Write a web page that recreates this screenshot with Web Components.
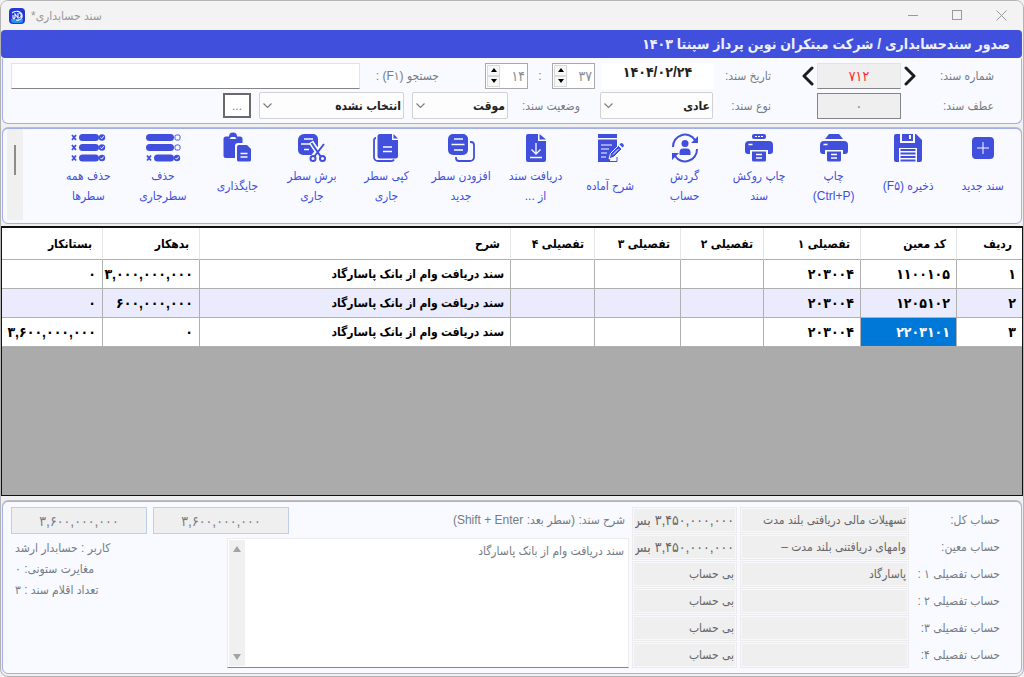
<!DOCTYPE html>
<html lang="fa" dir="rtl">
<head>
<meta charset="utf-8">
<title>سند حسابداری</title>
<style>
  :root {
    --accent: #4150dc;
    --panel: #f9faff;
    --line: #a3aeea;
    --muted: #747c86;
    --field: #efefef;
  }
  body {
    margin: 0;
    background: #f0f0f0;
    font: 12px/20px "Liberation Sans", "DejaVu Sans Condensed", "DejaVu Sans", sans-serif;
    color: var(--muted);
  }
  .form-row { display: flex; align-items: center; min-height: 27px; }
  .form-row + .form-row { margin-top: 3px; }
  .gap-s { margin-inline-start: 8px; }
  .gap-m { margin-inline-start: 20px; }
  .gap-l { margin-inline-start: 46px; }
  .gap-nav { margin-inline-start: 28px; }
  .grow { flex: 1; }
  .tools { display: flex; }
  .tools tool-button { flex: 1; }
  .summary { display: flex; gap: 3px; }
  .accounts { display: grid; gap: 1px; }
</style>
</head>
<body>
<app-window>
  <title-bar slot="title" text="سند حسابداری*"></title-bar>
  <page-banner slot="banner">صدور سندحسابداری / شرکت مبتکران نوین پرداز سپنتا ۱۴۰۳</page-banner>

  <group-panel slot="form" class="form" joined>
    <div class="form-row">
      <number-nav label="شماره سند:" value="۷۱۲"></number-nav>
      <form-field class="gap-nav" label="تاریخ سند:" value="۱۴۰۴/۰۲/۲۴" kind="date" style="--label: 57px; --control: 113px"></form-field>
      <time-spinner minute="۳۷" hour="۱۴"></time-spinner>
      <form-field class="gap-l grow" label="جستجو (F۱) :" kind="search" style="--label: 79px"></form-field>
    </div>
    <div class="form-row">
      <form-field label="عطف سند:" value="۰" kind="locked" style="--label: 93px; --control: 84px"></form-field>
      <combo-box class="gap-l" label="نوع سند:" value="عادی" style="--label: 58px; --control: 113px"></combo-box>
      <combo-box class="gap-m" label="وضعیت سند:" value="موقت" style="--label: 72px; --control: 96px"></combo-box>
      <combo-box class="gap-s" name="دسته سند" value="انتخاب نشده" style="--control: 145px"></combo-box>
      <more-button class="gap-s"></more-button>
    </div>
  </group-panel>

  <group-panel slot="tools" class="bar" handle>
    <div class="tools">
      <tool-button icon="add">سند جدید</tool-button>
      <tool-button icon="save">ذخیره (F۵)</tool-button>
      <tool-button icon="print">چاپ<br>(Ctrl+P)</tool-button>
      <tool-button icon="cover">چاپ روکش<br>سند</tool-button>
      <tool-button icon="turnover">گردش<br>حساب</tool-button>
      <tool-button icon="note">شرح آماده</tool-button>
      <tool-button icon="receive">دریافت سند<br>از ...</tool-button>
      <tool-button icon="insert">افزودن سطر<br>جدید</tool-button>
      <tool-button icon="copy">کپی سطر<br>جاری</tool-button>
      <tool-button icon="cut">برش سطر<br>جاری</tool-button>
      <tool-button icon="paste">جایگذاری</tool-button>
      <tool-button icon="remove">حذف<br>سطرجاری</tool-button>
      <tool-button icon="clear">حذف همه<br>سطرها</tool-button>
    </div>
  </group-panel>

  <ledger-grid slot="grid"></ledger-grid>

  <group-panel slot="summary" class="foot">
    <div class="summary">
      <div class="accounts">
        <account-row label="حساب کل:" value="تسهیلات مالی دریافتی بلند مدت" balance="۳,۴۵۰,۰۰۰,۰۰۰ بس" amount></account-row>
        <account-row label="حساب معین:" value="وامهای دریافتنی بلند مدت –" balance="۳,۴۵۰,۰۰۰,۰۰۰ بس" amount></account-row>
        <account-row label="حساب تفصیلی ۱ :" value="پاسارگاد" balance="بی حساب"></account-row>
        <account-row label="حساب تفصیلی ۲ :" balance="بی حساب"></account-row>
        <account-row label="حساب تفصیلی ۳:" balance="بی حساب"></account-row>
        <account-row label="حساب تفصیلی ۴:" balance="بی حساب"></account-row>
      </div>
      <document-note class="grow" label="شرح سند: (سطر بعد: Shift + Enter)" text="سند دریافت وام از بانک پاسارگاد" debit="۳,۶۰۰,۰۰۰,۰۰۰" credit="۳,۶۰۰,۰۰۰,۰۰۰">
        <div>کاربر : حسابدار ارشد</div>
        <div>مغایرت ستونی: ۰</div>
        <div>تعداد اقلام سند : ۳</div>
      </document-note>
    </div>
  </group-panel>
</app-window>

<script>
const controlStyles = `
  * { box-sizing: border-box; }
  input, select, textarea, button { font: inherit; color: inherit; margin: 0; border-radius: 0; }
  label { white-space: nowrap; }
  svg { display: block; }
`;

class BaseElement extends HTMLElement {
  constructor() {
    super();
    this.attachShadow({ mode: "open" });
  }

  connectedCallback() {
    this.shadowRoot.innerHTML = `<style>${controlStyles}${this.styles()}</style>${this.render()}`;
  }

  attr(name) {
    return this.getAttribute(name) || "";
  }
}

class AppWindow extends BaseElement {
  styles() {
    return `
      :host {
        display: flex; flex-direction: column; min-height: 100vh; box-sizing: border-box;
        border: 1px solid #b4b4b4; border-radius: 8px; overflow: hidden; padding-bottom: 2px;
      }
      slot { display: block; }
      .tools { margin-top: 4px; }
      .grid { flex: 1; display: flex; margin: 2px 0 5px; }
    `;
  }

  render() {
    return `
      <slot name="title"></slot>
      <slot name="banner"></slot>
      <slot name="form"></slot>
      <slot name="tools" class="tools"></slot>
      <slot name="grid" class="grid"></slot>
      <slot name="summary"></slot>
    `;
  }
}
customElements.define("app-window", AppWindow);

class TitleBar extends BaseElement {
  styles() {
    return `
      :host { display: flex; direction: ltr; align-items: center; height: 29px; padding: 0 8px; background: #f3f3f3; color: #989898; }
      .name { direction: rtl; margin-left: 6px; flex: 1; text-align: left; }
      button { width: 44px; height: 28px; border: 0; background: none; padding: 0; display: grid; place-items: center; }
      button:last-child { margin-right: -8px; }
    `;
  }

  render() {
    return `
      <svg width="16" height="16" viewBox="0 0 16 16">
        <rect width="16" height="16" rx="4" fill="#2438d0"/>
        <path d="M2 11h12v1a3 3 0 0 1-3 3H5a3 3 0 0 1-3-3z" fill="#2492f0"/>
        <path d="M3 5c3-3 9-2 10 2s-3 6-6 5M4 7v3c0 1 2 1 2-1V6l3 4V5M10 5c3 0 3 4 0 5" fill="none" stroke="#dff0ff" stroke-width="1.2"/>
      </svg>
      <span class="name">${this.attr("text")}</span>
      <button aria-label="کوچک"><svg width="11" height="11"><path d="M0 5.500h10" stroke="#9a9a9a"/></svg></button>
      <button aria-label="بزرگ"><svg width="11" height="11"><rect x=".5" y=".5" width="9" height="9" fill="none" stroke="#9a9a9a"/></svg></button>
      <button aria-label="بستن"><svg width="11" height="11"><path d="M.5.5l10 10M10.500.5l-10 10" stroke="#9a9a9a"/></svg></button>
    `;
  }
}
customElements.define("title-bar", TitleBar);

class PageBanner extends BaseElement {
  styles() {
    return `
      :host {
        display: block; margin-inline-start: 1px; padding: 0 12px; border-radius: 4px; background: var(--accent);
        color: #eef0ff; font-size: 14px; font-weight: bold; line-height: 28px;
      }
    `;
  }

  render() {
    return `<slot></slot>`;
  }
}
customElements.define("page-banner", PageBanner);

class GroupPanel extends BaseElement {
  styles() {
    return `
      :host {
        display: flex; margin: 0 1px; background: var(--panel); box-sizing: border-box;
        border: 1px solid var(--line); border-radius: 6px; box-shadow: 0 -1px 0 #bdbdc4;
      }
      :host([joined]) { border-top-color: transparent; box-shadow: none; border-radius: 0 0 6px 6px; }
      :host(.form) { padding: 3px 27px 4px 8px; }
      :host(.bar) { padding: 0 1px 3px 4px; }
      :host(.foot) { padding: 5px 21px 5px 8px; }
      .body { flex: 1; min-width: 0; }
      .handle { display: none; width: 16px; background: #f0f0f0; margin-inline-start: 28px; }
      .handle i { display: block; width: 2px; height: 30px; margin: 16px auto 0; background: #8c8c8c; }
      :host([handle]) .handle { display: block; }
    `;
  }

  render() {
    return `<div class="body"><slot></slot></div><div class="handle"><i></i></div>`;
  }
}
customElements.define("group-panel", GroupPanel);

class FormField extends BaseElement {
  styles() {
    return `
      :host { display: flex; align-items: center; }
      label { width: var(--label); }
      input { width: var(--control, auto); height: 26px; padding: 0 6px; text-align: center; font-size: 14px; }
      .date { border: 0; background: #fff; color: #222; font-weight: bold; padding-bottom: 8px; }
      .locked { border: 1px solid #858585; background: var(--field); }
      .search { flex: 1; min-width: 0; border: 1px solid #e4e4e4; border-bottom-color: #858585; background: #fff; text-align: start; }
    `;
  }

  render() {
    return `
      <label for="control">${this.attr("label")}</label>
      <input id="control" class="${this.attr("kind")}" value="${this.attr("value")}" ${this.attr("kind") === "locked" ? "readonly" : ""}>
    `;
  }
}
customElements.define("form-field", FormField);

class NumberNav extends BaseElement {
  styles() {
    return `
      :host { display: flex; align-items: center; }
      label { width: 75px; }
      input { width: 84px; height: 26px; text-align: center; color: #ff2b2b; font-size: 14px; background: var(--field); border: 1px solid #e4e4e4; border-bottom-color: #858585; }
      button { width: 18px; height: 26px; padding: 0; border: 0; background: none; display: grid; place-items: center; }
      path { fill: none; stroke: #1c1c1c; stroke-width: 3; stroke-linecap: round; stroke-linejoin: round; }
    `;
  }

  render() {
    return `
      <label for="control">${this.attr("label")}</label>
      <button aria-label="سند قبلی"><svg width="12" height="20"><path d="M2 2l8 8-8 8"/></svg></button>
      <input id="control" value="${this.attr("value")}">
      <button aria-label="سند بعدی"><svg width="12" height="20"><path d="M10 2l-8 8 8 8"/></svg></button>
    `;
  }
}
customElements.define("number-nav", NumberNav);

class TimeSpinner extends BaseElement {
  styles() {
    return `
      :host { display: flex; align-items: center; margin-inline-start: 6px; }
      .spin { display: flex; width: 43px; height: 26px; border: 1px solid #a9a9a9; background: #fff; }
      input { flex: 1; min-width: 0; border: 0; padding: 0 2px; background: none; color: #8b8b8b; font-size: 14px; }
      .keys { display: flex; flex-direction: column; width: 15px; padding: 1px; }
      button { flex: 1; padding: 0; border: 1px solid #dadada; background: #f7f7f7; display: grid; place-items: center; }
      .colon { width: 24px; text-align: center; }
    `;
  }

  spinner(label, value) {
    return `
      <div class="spin">
        <input aria-label="${label}" value="${value}">
        <div class="keys">
          <button aria-label="بیشتر"><svg width="6" height="4"><path d="M0 4l3-4 3 4z"/></svg></button>
          <button aria-label="کمتر"><svg width="6" height="4"><path d="M0 0l3 4 3-4z"/></svg></button>
        </div>
      </div>
    `;
  }

  render() {
    return `
      ${this.spinner("دقیقه", this.attr("minute"))}
      <span class="colon">:</span>
      ${this.spinner("ساعت", this.attr("hour"))}
    `;
  }
}
customElements.define("time-spinner", TimeSpinner);

class ComboBox extends BaseElement {
  styles() {
    return `
      :host { display: flex; align-items: center; }
      label { width: var(--label, 0); }
      .box { display: grid; width: var(--control); }
      .box > * { grid-area: 1 / 1; }
      select {
        appearance: none; width: 100%; height: 27px; padding: 0 2px; border: 1px solid #d2d2d2; border-radius: 2px;
        background: #fdfdfd; color: #222; font-weight: bold;
      }
      svg { place-self: center end; margin-inline-end: 4px; pointer-events: none; }
    `;
  }

  render() {
    return `
      ${this.attr("label") && `<label for="control">${this.attr("label")}</label>`}
      <div class="box">
        <select id="control" ${this.attr("label") ? "" : `aria-label="${this.attr("name")}"`}><option>${this.attr("value")}</option></select>
        <svg width="9" height="6"><path d="M.5.5l4 4 4-4" fill="none" stroke="#808080" stroke-width="1.200"/></svg>
      </div>
    `;
  }
}
customElements.define("combo-box", ComboBox);

class MoreButton extends BaseElement {
  styles() {
    return `
      :host { display: block; }
      button { display: block; width: 28px; height: 25px; padding: 0; border: 2px solid #6a6a6a; background: #fff; }
    `;
  }

  render() {
    return `<button aria-label="بیشتر">...</button>`;
  }
}
customElements.define("more-button", MoreButton);

const rowIcon = (y, crossed, checked) => `
  ${crossed ? `<path d="M-2 ${y}l4 5M2 ${y}l-4 5" class="s" stroke-width="1.800"/>` : ""}
  <rect x="${crossed ? 5 : -3}" y="${y - 1}" width="${crossed ? 20 : 28}" height="7" rx="3.500"/>
  ${checked
    ? `<circle cx="28" cy="${y + 2.5}" r="3.200"/><path d="M26.500 ${y + 2.5}l1.200 1.200 2-2.500" class="w"/>`
    : `<rect x="26" y="${y}" width="5" height="5" rx="1.500" class="s"/>`}
`;

const printerBody = `
  <path d="M4 7h20a4 4 0 0 1 4 4v6a3 3 0 0 1-3 3h-2v-4H5v4H3a3 3 0 0 1-3-3v-6a4 4 0 0 1 4-4z"/>
  <path d="M3.500 10.500h4" class="w" stroke-width="1.500"/>
  <path d="M7 17.500h14V26a1.500 1.500 0 0 1-1.500 1.500h-11A1.500 1.500 0 0 1 7 26z"/>
  <path d="M11 20.500h6M11 24h6" class="w" stroke-width="1.500"/>
`;

const icons = {
  add: `<rect x="3" y="3" width="22" height="22" rx="4"/><path d="M14 8v12M8 14h12" class="w"/>`,
  save: `
    <path d="M2 0h20l6 6v20a2 2 0 0 1-2 2H2a2 2 0 0 1-2-2V2a2 2 0 0 1 2-2z"/>
    <path d="M6 0h15v9H6z" fill="#f9faff"/>
    <path d="M8 0h11v7H8z"/><path d="M15 1h2v4h-2z" fill="#f9faff"/>
    <path d="M5 28V14h18v14z" fill="#f9faff"/>
    <path d="M6.500 16h15M6.500 19.500h15M6.500 23h15M6.500 26.500h15" class="s" stroke-width="1.800"/>`,
  print: `<path d="M9 0h10l4 5H5z"/>${printerBody}`,
  cover: `<rect x="7" width="14" height="5" rx="2"/><path d="M10 2.500h8" class="w" stroke-dasharray="2 1"/>${printerBody}`,
  turnover: `
    <path d="M2 13A12 12 0 0 1 24 6M26 15A12 12 0 0 1 4 22" class="s" stroke-width="2"/>
    <path d="M27 2v7h-7zM1 26v-7h7z"/>
    <circle cx="14" cy="9.500" r="3.500"/><path d="M8.500 21v-2.500a4 4 0 0 1 4-4h3a4 4 0 0 1 4 4V21z"/>`,
  note: `
    <path d="M2 0h19v4H2zM2 5.500h19V14l-6 7-1 6h7v1H2z"/>
    <path d="M5 11h11M5 15h8M5 19h6M5 23h5" class="w"/>
    <path d="M13 25l1.500-5.500 8-8 3.500 3.500-8 8z" stroke="#f9faff"/>
    <path d="M23.500 10.500l1-1a1.500 1.500 0 0 1 2 0l1 1a1.500 1.500 0 0 1 0 2l-1 1z"/>
    <path d="M17 20.500l5.500-5.500" class="w"/><path d="M14 27.500h7V23" class="s"/>`,
  receive: `
    <path d="M6 0h10v7h8v19a2 2 0 0 1-2 2H6a2 2 0 0 1-2-2V2a2 2 0 0 1 2-2z"/><path d="M17.500 0L24 5.500h-6.500z"/>
    <path d="M14 9v11M9.500 15.500l4.500 4.500 4.500-4.500M8 23.500h12" class="w" stroke-width="1.300"/>`,
  insert: `
    <rect x="1" width="20" height="21" rx="5"/><path d="M7 5h9M4.500 10.500h13M7 16h9" class="w" stroke-width="1.600"/>
    <path d="M23 8h1a3 3 0 0 1 3 3v12a4 4 0 0 1-4 4H12a3 3 0 0 1-3-3v-1" class="s" stroke-width="1.800"/>`,
  copy: `
    <path d="M8 0h12v6h6v16a2.500 2.500 0 0 1-2.500 2.500H8A2.500 2.500 0 0 1 5.500 22V2.500A2.500 2.500 0 0 1 8 0z"/><path d="M21.500 0L26 4.500h-4.500z"/>
    <path d="M11 13h9M11 17.500h9" class="w" stroke-width="1.300"/>
    <path d="M4 4a2 2 0 0 0-2 2v17a4 4 0 0 0 4 4h13a3 3 0 0 0 3-1.500" class="s" stroke-width="1.800"/>`,
  cut: `
    <path d="M6 0h9a5 5 0 0 1 5 5v7l-4 9H5a5 5 0 0 1-5-5V6a6 6 0 0 1 6-6z"/>
    <path d="M6 5h9M3 10h11M6 15.500h5" class="w" stroke-width="1.600"/>
    <path d="M13 8l10 15M26 9L15 23" stroke="#f9faff" stroke-width="5"/>
    <path d="M13.500 9l9.500 14M26 10L16 23" class="s" stroke-width="2"/>
    <circle cx="15" cy="24.500" r="2.500" fill="#f9faff" stroke="#4150dc" stroke-width="2"/>
    <circle cx="24.500" cy="24.500" r="2.500" fill="#f9faff" stroke="#4150dc" stroke-width="2"/>`,
  paste: `
    <path d="M3 2.500h3a4 4 0 0 1 8 0h3A2.500 2.500 0 0 1 19.500 5v4H15a3 3 0 0 0-3 3v12H3a2.500 2.500 0 0 1-2.500-2.500V5A2.500 2.500 0 0 1 3 2.500z"/>
    <path d="M6.500 5h7l-1.500-2H8z" fill="#f9faff"/>
    <path d="M16 11h8l4 4v11a1.500 1.500 0 0 1-1.500 1.500H15.500A1.500 1.500 0 0 1 14 26V13a2 2 0 0 1 2-2z"/>
    <path d="M17.500 19.500h7M17.500 23h7" class="w" stroke-width="1.400"/>`,
  remove: rowIcon(1, false, false) + rowIcon(11, false, false) + rowIcon(21.5, true, true),
  clear: rowIcon(1, true, true) + rowIcon(11, true, true) + rowIcon(21.5, true, true),
};

class ToolButton extends BaseElement {
  styles() {
    return `
      :host { display: block; min-width: 0; }
      button {
        display: flex; flex-direction: column; align-items: center; width: 100%; height: 91px;
        padding: 5px 0 0; border: 0; background: none; color: var(--accent);
      }
      svg { overflow: visible; fill: var(--accent); }
      .s { fill: none; stroke: var(--accent); }
      .w { fill: none; stroke: #f9faff; }
      .text { display: grid; align-content: center; height: 40px; margin-top: 4px; white-space: nowrap; }
    `;
  }

  render() {
    return `
      <button>
        <svg width="28" height="28" viewBox="0 0 28 28" aria-hidden="true">${icons[this.attr("icon")]}</svg>
        <span class="text"><span><slot></slot></span></span>
      </button>
    `;
  }
}
customElements.define("tool-button", ToolButton);

const columns = [
  ["ردیف", 66],
  ["کد معین", 96],
  ["تفصیلی ۱", 97],
  ["تفصیلی ۲", 83],
  ["تفصیلی ۳", 86],
  ["تفصیلی ۴", 84],
  ["شرح", null],
  ["بدهکار", 97],
  ["بستانکار", 100],
];

const entries = [
  ["۱", "۱۱۰۰۱۰۵", "۲۰۳۰۰۴", "", "", "", "سند دریافت وام از بانک پاسارگاد", "۳,۰۰۰,۰۰۰,۰۰۰", "۰"],
  ["۲", "۱۲۰۵۱۰۲", "۲۰۳۰۰۴", "", "", "", "سند دریافت وام از بانک پاسارگاد", "۶۰۰,۰۰۰,۰۰۰", "۰"],
  ["۳", "۲۲۰۳۱۰۱", "۲۰۳۰۰۴", "", "", "", "سند دریافت وام از بانک پاسارگاد", "۰", "۳,۶۰۰,۰۰۰,۰۰۰"],
];

class LedgerGrid extends BaseElement {
  styles() {
    return `
      :host { display: block; flex: 1; min-width: 0; background: #ababab; border: 1px solid #111; border-top-width: 2px; color: #000; }
      table { width: 100%; table-layout: fixed; border-collapse: separate; border-spacing: 0; background: #fff; font-weight: bold; }
      th, td { padding: 0 6px; text-align: start; white-space: nowrap; border-bottom: 1px solid #b0b0b0; border-inline-end: 1px solid #b0b0b0; }
      th { height: 32px; padding-inline-start: 10px; border-inline-end-color: #e6e6e6; }
      td { height: 29px; font-size: 14px; }
      td:nth-child(7) { font-size: 12px; }
      th:last-child, td:last-child { border-inline-end: 0; }
      tbody tr:nth-child(2) { background: #eaebfd; }
      .selected { background: #0078d7; color: #fff; }
    `;
  }

  render() {
    const cols = columns.map(([, width]) => `<col ${width ? `style="width: ${width}px"` : ""}>`).join("");
    const head = columns.map(([name]) => `<th scope="col">${name}</th>`).join("");
    const rows = entries
      .map((cells, row) => {
        const tds = cells.map((cell, i) => `<td${row === 2 && i === 1 ? ' class="selected"' : ""}>${cell}</td>`);
        return `<tr>${tds.join("")}</tr>`;
      })
      .join("");
    return `<table><colgroup>${cols}</colgroup><thead><tr>${head}</tr></thead><tbody>${rows}</tbody></table>`;
  }
}
customElements.define("ledger-grid", LedgerGrid);

class AccountRow extends BaseElement {
  styles() {
    return `
      :host { display: flex; align-items: center; }
      label { width: 91px; }
      input { height: 26px; padding: 0 2px; border: 1px solid #ececef; background: var(--field); box-shadow: inset 0 0 0 1px #f8f8fb; color: #666; }
      .value { width: 169px; }
      .balance { width: 105px; margin-inline-start: 3px; }
      :host([amount]) .balance { font-size: 14px; }
    `;
  }

  render() {
    return `
      <label for="control">${this.attr("label")}</label>
      <input id="control" class="value" value="${this.attr("value")}" readonly>
      <input class="balance" aria-label="مانده" value="${this.attr("balance")}" readonly>
    `;
  }
}
customElements.define("account-row", AccountRow);

class DocumentNote extends BaseElement {
  styles() {
    return `
      :host { display: flex; flex-direction: column; min-width: 0; }
      .top { display: flex; gap: 6px; margin-bottom: 4px; }
      .top label { flex: 1; padding: 3px 4px 0 0; }
      .top input { width: 136px; height: 27px; text-align: center; font-size: 14px; border: 1px solid #bfcfea; background: var(--field); }
      .bottom { display: flex; flex: 1; justify-content: space-between; }
      .memo { display: flex; width: 402px; border: 1px solid #ececec; border-bottom-color: #858585; background: #fff; }
      textarea { flex: 1; min-width: 0; resize: none; border: 0; padding: 2px 4px; background: none; overflow: hidden; outline: 0; }
      .scroll { display: flex; flex-direction: column; justify-content: space-between; align-items: center; width: 16px; padding: 6px 0; background: #f0f0f0; margin: 1px; }
      .scroll path { fill: #a3a3a3; }
      .info { direction: ltr; padding-left: 4px; line-height: 21px; }
      .info slot { display: block; unicode-bidi: isolate; }
      ::slotted(div) { direction: rtl; text-align: left; }
    `;
  }

  render() {
    return `
      <div class="top">
        <label for="memo">${this.attr("label")}</label>
        <input aria-label="جمع بدهکار" value="${this.attr("debit")}" readonly>
        <input aria-label="جمع بستانکار" value="${this.attr("credit")}" readonly>
      </div>
      <div class="bottom">
        <div class="memo">
          <textarea id="memo">${this.attr("text")}</textarea>
          <div class="scroll">
            <svg width="8" height="6"><path d="M0 6l4-6 4 6z"/></svg>
            <svg width="8" height="6"><path d="M0 0l4 6 4-6z"/></svg>
          </div>
        </div>
        <div class="info"><slot></slot></div>
      </div>
    `;
  }
}
customElements.define("document-note", DocumentNote);
</script>
</body>
</html>
